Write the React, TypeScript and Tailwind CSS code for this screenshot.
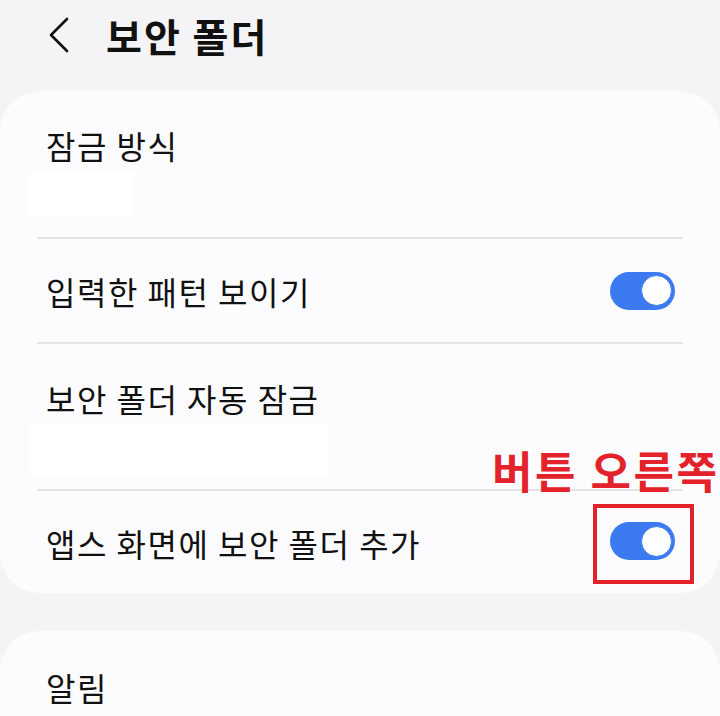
import React from "react";

const font = { fontFamily: '"Noto Sans CJK KR", "Noto Sans", sans-serif' };

function Toggle() {
  return (
    <div className="flex h-[38px] w-[65px] items-center justify-end rounded-full bg-[#3b7af0] pr-[3px]">
      <div className="h-[31px] w-[31px] rounded-full border border-[#3b7af0] bg-white" />
    </div>
  );
}

function Divider() {
  return <div className="mx-[37px] h-[2px] bg-[#e4e4e6]" />;
}

export default function App() {
  return (
    <div
      className="relative h-[716px] w-[720px] overflow-hidden bg-[#f4f4f6] text-[#111111]"
      style={font}
    >
      {/* top bar */}
      <div className="flex h-[91px] items-center pb-[22px]">
        <svg
          className="ml-[48px] h-[38px] w-[22px]"
          viewBox="0 0 22 38"
          fill="none"
          stroke="#111111"
          strokeWidth="2.6"
          strokeLinecap="round"
          strokeLinejoin="round"
        >
          <polyline points="19,3 3,19 19,35" />
        </svg>
        <h1 className="ml-[36px] text-[39px] font-bold leading-[48px] tracking-[2px]">
          보안 폴더
        </h1>
      </div>

      {/* settings card */}
      <div className="h-[502px] rounded-[40px] bg-[#fcfcfe]">
        <div className="flex flex-col pt-[34px]">
          <div className="pl-[46px] text-[32px] leading-[40px] tracking-[1.5px]">잠금 방식</div>
          <div className="ml-[28px] mt-[7px] h-[45px] w-[105px] bg-white" />
        </div>
        <div className="mt-[20px]">
          <Divider />
        </div>
        <div className="flex h-[103px] items-center justify-between pl-[46px] pr-[45px]">
          <span className="text-[32px] leading-[40px] tracking-[1.5px]">입력한 패턴 보이기</span>
          <Toggle />
        </div>
        <Divider />
        <div className="flex flex-col pt-[34px]">
          <div className="pl-[46px] text-[32px] leading-[40px] tracking-[1.5px]">보안 폴더 자동 잠금</div>
          <div className="ml-[30px] mt-[6px] h-[52px] w-[298px] bg-white" />
        </div>
        <div className="mt-[13px]">
          <Divider />
        </div>
        <div className="flex h-[100px] items-center justify-between pl-[46px] pr-[45px]">
          <span className="mt-[4px] text-[32px] leading-[40px] tracking-[1.5px]">
            앱스 화면에 보안 폴더 추가
          </span>
          <Toggle />
        </div>
      </div>

      {/* second card */}
      <div className="mt-[38px] h-[200px] rounded-[40px] bg-[#fcfcfe] pt-[36px]">
        <div className="pl-[46px] text-[32px] leading-[40px] tracking-[1.5px]">알림</div>
      </div>

      {/* callout label */}
      <div className="absolute left-[492px] top-[445px] text-[44px] font-bold leading-[50px] tracking-[2.5px] text-[#e3222b]">
        버튼 오른쪽
      </div>
      <div className="absolute left-[593px] top-[504px] h-[80px] w-[101px] border-[4px] border-[#e3222b]" />
    </div>
  );
}
